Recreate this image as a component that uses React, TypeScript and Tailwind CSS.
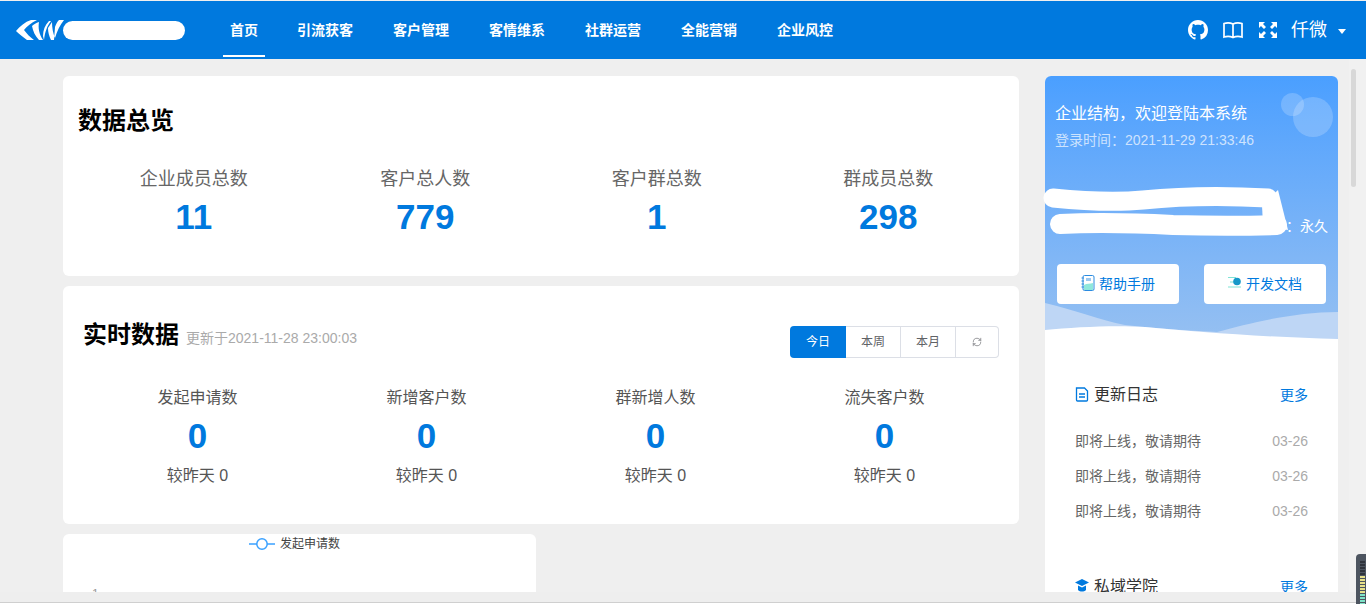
import React from 'react';
import { RefreshCw } from 'lucide-react';

const NAV = ['首页', '引流获客', '客户管理', '客情维系', '社群运营', '全能营销', '企业风控'];

const OVERVIEW = [
  { label: '企业成员总数', value: '11' },
  { label: '客户总人数', value: '779' },
  { label: '客户群总数', value: '1' },
  { label: '群成员总数', value: '298' },
];

const REALTIME = ['发起申请数', '新增客户数', '群新增人数', '流失客户数'];

const FONT = "font-['Liberation_Sans','Noto_Sans_CJK_SC',sans-serif]";

const Logo = () => (
  <svg width="48" height="22" viewBox="0 0 48 22" fill="white">
    <path d="M0 12 C4 7 9 3 15 1 L21 1 C15 4 11 7 8 11 C11 15 14 18 18 21 L11 21 C7 18 3 15 0 12 Z" />
    <path d="M16 7 C18 5 20 4 23 3 C22 9 23 15 27 21 L23 21 C19 17 17 12 16 7 Z" />
    <path d="M27 17 C27 11 29 6 33 2 L35 2 C31 7 29 13 28 21 Z" />
    <path d="M32 9 L36 3 C36 9 37 14 39 19 C41 12 44 6 48 1 L43 1 C41 3 40 5 39 8 L38 21 L35 21 C33 17 32 13 32 9 Z" />
  </svg>
);

export default function App() {
  return (
    <div className={`${FONT} relative h-[604px] overflow-hidden bg-[#efefef] flex flex-col`}>
      {/* Header */}
      <header className="h-[58px] mt-px shrink-0 bg-[#0079de] flex items-center text-white">
        <div className="w-[223px] pl-4 flex items-center shrink-0">
          <Logo />
          <div className="w-[122px] h-[19px] rounded-full bg-white -ml-[1px]" />
        </div>
        <nav className="flex h-full">
          {NAV.map((item, i) => (
            <div
              key={item}
              className={`relative h-full flex items-center text-sm font-bold ${i === 0 ? 'w-[42px] justify-center mr-[32px]' : 'mr-[40px]'}`}
            >
              {item}
              {i === 0 && <span className="absolute left-0 right-0 bottom-[2px] h-[2px] bg-white" />}
            </div>
          ))}
        </nav>
        <div className="ml-auto flex items-center pr-[20px]">
          <svg width="20" height="20" viewBox="0 0 16 16" fill="white" className="mr-[15px]">
            <path d="M8 0C3.58 0 0 3.58 0 8c0 3.54 2.29 6.53 5.47 7.59.4.07.55-.17.55-.38 0-.19-.01-.82-.01-1.49-2.01.37-2.53-.49-2.69-.94-.09-.23-.48-.94-.82-1.13-.28-.15-.68-.52-.01-.53.63-.01 1.08.58 1.23.82.72 1.21 1.87.87 2.33.66.07-.52.28-.87.51-1.07-1.78-.2-3.64-.89-3.64-3.95 0-.87.31-1.59.82-2.15-.08-.2-.36-1.02.08-2.12 0 0 .67-.21 2.2.82.64-.18 1.32-.27 2-.27s1.36.09 2 .27c1.53-1.04 2.2-.82 2.2-.82.44 1.1.16 1.92.08 2.12.51.56.82 1.27.82 2.15 0 3.07-1.87 3.75-3.65 3.95.29.25.54.73.54 1.48 0 1.07-.01 1.93-.01 2.2 0 .21.15.46.55.38A8.01 8.01 0 0 0 16 8c0-4.42-3.58-8-8-8z" />
          </svg>
          <svg width="20" height="18" viewBox="0 0 20 18" fill="none" stroke="white" strokeWidth="1.7" className="mr-[15px]">
            <path d="M1 2.5 C4 1.5 7 1.5 10 3 C13 1.5 16 1.5 19 2.5 V16 C16 15 13 15 10 16.5 C7 15 4 15 1 16 Z M10 3 V16.5" />
          </svg>
          <svg width="20" height="18" viewBox="0 0 20 18" fill="white" className="mr-[13px]">
            <path d="M1 1 H7 L5 3 L8 6 L6 8 L3 5 L1 7 Z" />
            <path d="M19 1 H13 L15 3 L12 6 L14 8 L17 5 L19 7 Z" />
            <path d="M1 17 H7 L5 15 L8 12 L6 10 L3 13 L1 11 Z" />
            <path d="M19 17 H13 L15 15 L12 12 L14 10 L17 13 L19 11 Z" />
          </svg>
          <span className="text-lg leading-none">仟微</span>
          <span className="ml-[11px] mt-[3px] w-0 h-0 border-x-[4px] border-x-transparent border-t-[5px] border-t-white" />
        </div>
      </header>

      {/* Body */}
      <div className="flex-1 min-h-0 flex pl-[63px] pt-[17px] overflow-hidden relative">
        <main className="w-[956px] shrink-0 flex flex-col gap-[10px]">
          <section className="h-[200px] shrink-0 bg-white rounded-md pt-[30px] px-[15px]">
            <h2 className="text-2xl leading-[30px] font-bold text-black">数据总览</h2>
            <div className="grid grid-cols-4 mt-[30px] w-[926px]">
              {OVERVIEW.map(o => (
                <div key={o.label} className="text-center">
                  <div className="text-lg leading-[26px] text-[#666]">{o.label}</div>
                  <div className="text-[35px] leading-[40px] mt-[5px] font-bold text-[#0079de]">{o.value}</div>
                </div>
              ))}
            </div>
          </section>

          <section className="h-[238px] shrink-0 bg-white rounded-md pt-[32px] px-[20px]">
            <div className="flex items-start justify-between">
              <div className="flex items-baseline">
                <h2 className="text-2xl leading-[34px] font-bold text-black">实时数据</h2>
                <span className="ml-[7px] text-sm text-[#aaa]">更新于2021-11-28 23:00:03</span>
              </div>
              <div className="flex mt-[8px] h-[32px] text-xs text-[#606266]">
                <div className="w-[56px] rounded-l bg-[#0079de] text-white flex items-center justify-center">今日</div>
                <div className="w-[55px] border-y border-r border-[#dcdfe6] flex items-center justify-center">本周</div>
                <div className="w-[55px] border-y border-r border-[#dcdfe6] flex items-center justify-center">本月</div>
                <div className="w-[43px] border-y border-r border-[#dcdfe6] rounded-r flex items-center justify-center">
                  <RefreshCw size={10} strokeWidth={1.5} />
                </div>
              </div>
            </div>
            <div className="grid grid-cols-4 mt-[28px] w-[916px]">
              {REALTIME.map(label => (
                <div key={label} className="text-center">
                  <div className="text-base leading-[24px] text-[#555]">{label}</div>
                  <div className="text-[35px] leading-[40px] mt-[6px] font-bold text-[#0079de]">0</div>
                  <div className="text-base leading-[24px] mt-[8px] text-[#555]">较昨天 0</div>
                </div>
              ))}
            </div>
          </section>

          <section className="w-[473px] h-[100px] shrink-0 bg-white rounded-md relative">
            <div className="flex items-center justify-center h-[20px] pr-[10px] text-xs text-[#444]">
              <svg width="26" height="12" viewBox="0 0 26 12" fill="none" stroke="#3aa1ff" className="mr-[5px]">
                <path d="M0 6 H26" strokeWidth="1.5" />
                <circle cx="13" cy="6" r="5.2" fill="white" strokeWidth="1.5" />
              </svg>
              发起申请数
            </div>
            <span className="absolute left-[29px] top-[52px] text-xs text-[#999]">1</span>
          </section>
        </main>

        <aside className="ml-[26px] w-[293px] shrink-0 h-[516px] bg-white rounded-t-md">
          <div className="h-[265px] rounded-t-md bg-gradient-to-b from-[#4a9fff] to-[#96c0f1] relative px-[10px] pt-[27px] text-white">
            <span className="absolute left-[248px] top-[21px] w-[40px] h-[40px] rounded-full bg-white/20" />
            <span className="absolute left-[236px] top-[17px] w-[23px] h-[23px] rounded-full bg-white/20" />
            <div className="text-base leading-[22px]">企业结构，欢迎登陆本系统</div>
            <div className="text-sm leading-[20px] mt-[5px] text-white/70">登录时间：2021-11-29 21:33:46</div>

            <div className="absolute right-[10px] top-[140px] text-sm leading-[20px]">：永久</div>

            {/* scribbled-out lines, as drawn over the screenshot */}
            <svg width="250" height="54" viewBox="0 0 250 54" className="absolute -left-[2px] top-[110px]" fill="none" stroke="white" strokeLinecap="round">
              <path d="M10 12 C40 15 70 17 100 14 C140 10 190 10 225 12" strokeWidth="19" />
              <path d="M219 19 L235 4 L245 44 L220 39 Z" fill="white" stroke="none" />
              <path d="M17 38 C60 36 90 37 130 39 C170 40 200 40 234 39" strokeWidth="20" />
            </svg>

            <div className="absolute left-[12px] right-[12px] top-[188px] flex justify-between z-10">
              <div className="w-[122px] h-[40px] rounded bg-white flex items-center justify-center text-sm text-[#0079de]">
                <svg width="14" height="16" viewBox="0 0 14 16" className="mr-[4px] mb-[3px]">
                  <rect x="2" y="0.5" width="11" height="15" rx="1.5" fill="white" stroke="#2a8be0" />
                  <path d="M3 15 V10 C6 8 9 9 12 8 V15 Z" fill="#8fe8dc" />
                  <rect x="5" y="3" width="5" height="3" fill="#9cc9f0" />
                  <path d="M0.5 3 H3 M0.5 6 H3 M0.5 9 H3 M0.5 12 H3" stroke="#2a8be0" />
                </svg>
                帮助手册
              </div>
              <div className="w-[122px] h-[40px] rounded bg-white flex items-center justify-center text-sm text-[#0079de]">
                <svg width="14" height="13" viewBox="0 0 14 13" className="mr-[4px] mb-[3px]">
                  <path d="M0 1.5 H8 M2 6 H6 M0 11 H13" stroke="#7fe3d6" strokeWidth="1.2" />
                  <circle cx="9" cy="5.5" r="3.8" fill="#1598c9" />
                </svg>
                开发文档
              </div>
            </div>

            <svg className="absolute left-0 bottom-0" width="293" height="40" viewBox="0 0 293 40">
              <path d="M0 2 C30 9 55 19 80 24 C120 28 150 30 172 31 C205 22 250 11 293 11 V40 H0 Z" fill="#bed6f5" />
              <path d="M0 29 C30 26 70 24 100 26 C150 31 220 36 293 38 V40 H0 Z" fill="white" />
            </svg>
          </div>

          <div className="px-[30px] pt-[42px]">
            <div className="flex items-center justify-between">
              <div className="flex items-center text-base text-[#333]">
                <svg width="14" height="15" viewBox="0 0 14 15" fill="none" stroke="#0079de" strokeWidth="1.3" className="mr-[5px] mb-[2px]">
                  <path d="M1.5 1 H9.5 L12.5 4 V13 A1 1 0 0 1 11.5 14 H2.5 A1 1 0 0 1 1.5 13 Z" />
                  <path d="M4 7 H10 M4 10 H10" />
                </svg>
                更新日志
              </div>
              <span className="text-sm text-[#0079de]">更多</span>
            </div>
            <div className="mt-[24px] flex flex-col gap-[15px]">
              {[0, 1, 2].map(i => (
                <div key={i} className="flex justify-between text-sm leading-[20px]">
                  <span className="text-[#666]">即将上线，敬请期待</span>
                  <span className="text-[#aaa]">03-26</span>
                </div>
              ))}
            </div>
            <div className="flex items-center justify-between mt-[54px]">
              <div className="flex items-center text-base text-[#333]">
                <svg width="14" height="13" viewBox="0 0 14 13" fill="#0079de" className="mr-[5px] mb-[4px]">
                  <path d="M7 0 L14 3.5 L7 7 L0 3.5 Z" />
                  <path d="M3 6.5 L7 8.5 L11 6.5 V11 C9 13 5 13 3 11 Z" />
                </svg>
                私域学院
              </div>
              <span className="text-sm text-[#0079de]">更多</span>
            </div>
          </div>
        </aside>

        {/* page scrollbar */}
        <div className="absolute right-0 top-0 bottom-0 w-[17px] bg-[#f1f1f1] pl-[2px] pt-[10px]">
          <div className="w-[5px] h-[118px] rounded-full bg-[#d8d8d8]" />
        </div>
      </div>

      <div className="h-[11px] shrink-0 bg-[#eeeeee] border-b border-[#cfcfcf] z-20" />
      <div className="h-px shrink-0 bg-white z-20" />

      {/* corner of a desktop widget */}
      <div className="absolute right-0 bottom-0 w-[10px] h-[50px] rounded-tl bg-[#4d5560] z-30 pl-[4px] pt-[7px]">
        <svg width="5" height="43" viewBox="0 0 5 43">
          {Array.from({ length: 15 }, (_, i) => (
            <rect key={i} x="0" y={i * 3} width="5" height="2" fill={i < 5 ? '#2f343c' : i < 11 ? '#e6e08a' : '#7fe3c8'} />
          ))}
        </svg>
      </div>
    </div>
  );
}
